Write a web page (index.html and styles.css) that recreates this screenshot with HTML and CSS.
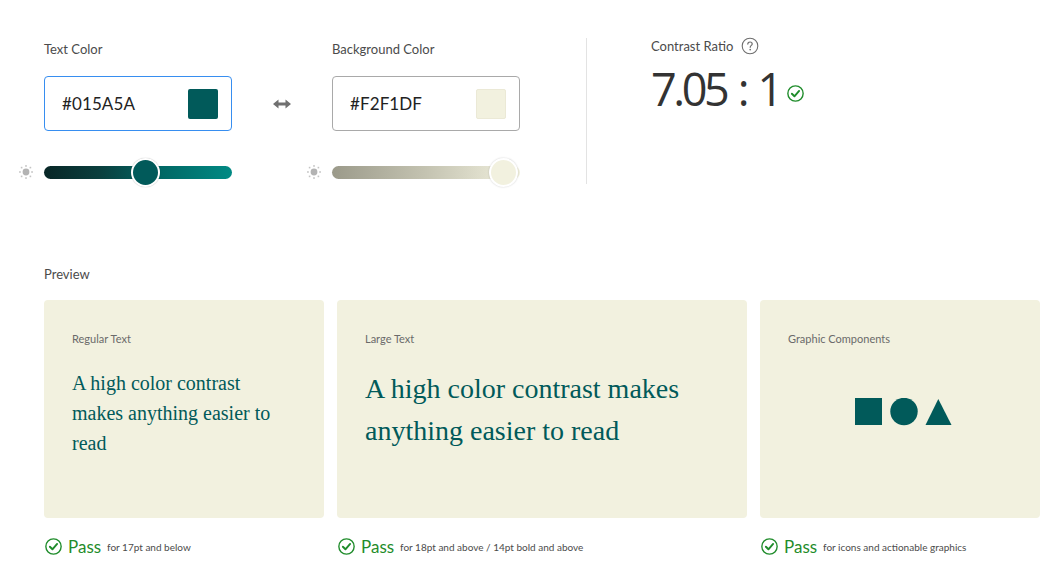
FILE: index.html
```html
<!DOCTYPE html>
<html lang="en">
<head>
<meta charset="utf-8">
<title>Contrast Checker</title>
<link rel="stylesheet" href="styles.css">
</head>
<body>
<main class="page">
  <section class="top">
    <div class="color-group">
      <div class="label">Text Color</div>
      <div class="field field-active">
        <span class="field-value">#015A5A</span>
        <span class="swatch swatch-text"></span>
      </div>
      <div class="slider-row">
        <svg class="sun" width="14" height="14" viewBox="0 0 14 14" aria-hidden="true">
          <circle cx="7" cy="7" r="3.4" fill="#b3b3b3"/>
          <g fill="#c4c4c4">
            <rect x="6.3" y="0" width="1.4" height="1.9"/>
            <rect x="6.3" y="12.1" width="1.4" height="1.9"/>
            <rect x="0" y="6.3" width="1.9" height="1.4"/>
            <rect x="12.1" y="6.3" width="1.9" height="1.4"/>
            <rect x="1.8" y="1.8" width="1.6" height="1.6"/>
            <rect x="10.6" y="1.8" width="1.6" height="1.6"/>
            <rect x="1.8" y="10.6" width="1.6" height="1.6"/>
            <rect x="10.6" y="10.6" width="1.6" height="1.6"/>
          </g>
        </svg>
        <div class="track track-text">
          <span class="thumb thumb-text" style="left: calc(53.7% - 14px)"></span>
        </div>
      </div>
    </div>

    <div class="swap">
      <svg width="18" height="10" viewBox="0 0 18 10" aria-hidden="true">
        <path d="M0 5 L5.5 0.5 V3.5 H12.5 V0.5 L18 5 L12.5 9.5 V6.5 H5.5 V9.5 Z" fill="#707070"/>
      </svg>
    </div>

    <div class="color-group">
      <div class="label">Background Color</div>
      <div class="field">
        <span class="field-value">#F2F1DF</span>
        <span class="swatch swatch-bg"></span>
      </div>
      <div class="slider-row">
        <svg class="sun" width="14" height="14" viewBox="0 0 14 14" aria-hidden="true">
          <circle cx="7" cy="7" r="3.4" fill="#b3b3b3"/>
          <g fill="#c4c4c4">
            <rect x="6.3" y="0" width="1.4" height="1.9"/>
            <rect x="6.3" y="12.1" width="1.4" height="1.9"/>
            <rect x="0" y="6.3" width="1.9" height="1.4"/>
            <rect x="12.1" y="6.3" width="1.9" height="1.4"/>
            <rect x="1.8" y="1.8" width="1.6" height="1.6"/>
            <rect x="10.6" y="1.8" width="1.6" height="1.6"/>
            <rect x="1.8" y="10.6" width="1.6" height="1.6"/>
            <rect x="10.6" y="10.6" width="1.6" height="1.6"/>
          </g>
        </svg>
        <div class="track track-bg">
          <span class="thumb thumb-bg" style="left: calc(91% - 14px)"></span>
        </div>
      </div>
    </div>

    <div class="divider"></div>

    <div class="ratio">
      <div class="ratio-label">
        <span>Contrast Ratio</span>
        <svg width="18" height="18" viewBox="0 0 18 18" aria-hidden="true">
          <circle cx="9" cy="9" r="7.8" fill="none" stroke="#6e6e6e" stroke-width="1.1"/>
          <path d="M6.8 7.1 C6.8 5.7 7.8 5 9 5 C10.3 5 11.2 5.8 11.2 6.9 C11.2 8.3 9.2 8.5 9.2 10.3" fill="none" stroke="#6e6e6e" stroke-width="1.2" stroke-linecap="round"/>
          <circle cx="9.2" cy="12.6" r="0.85" fill="#6e6e6e"/>
        </svg>
      </div>
      <div class="ratio-value">
        <span class="ratio-number">7.05 : 1</span>
        <svg class="check" width="17" height="17" viewBox="0 0 16 16" aria-hidden="true">
          <circle cx="8" cy="8" r="7.2" fill="none" stroke="#1f8c2b" stroke-width="1.3"/>
          <path d="M4.6 8.2 L7 10.6 L11.4 5.6" fill="none" stroke="#1f8c2b" stroke-width="1.8" stroke-linecap="round" stroke-linejoin="round"/>
        </svg>
      </div>
    </div>
  </section>

  <section class="preview">
    <div class="label">Preview</div>
    <div class="cards">
      <div class="col">
        <div class="card">
          <div class="card-title">Regular Text</div>
          <p class="sample sample-regular">A high color contrast makes anything easier to read</p>
        </div>
        <div class="pass">
          <svg class="check" width="17" height="17" viewBox="0 0 16 16" aria-hidden="true">
            <circle cx="8" cy="8" r="7.2" fill="none" stroke="#1f8c2b" stroke-width="1.3"/>
            <path d="M4.6 8.2 L7 10.6 L11.4 5.6" fill="none" stroke="#1f8c2b" stroke-width="1.8" stroke-linecap="round" stroke-linejoin="round"/>
          </svg>
          <span class="pass-word">Pass</span>
          <span class="pass-note">for 17pt and below</span>
        </div>
      </div>
      <div class="col">
        <div class="card">
          <div class="card-title">Large Text</div>
          <p class="sample sample-large">A high color contrast makes anything easier to read</p>
        </div>
        <div class="pass">
          <svg class="check" width="17" height="17" viewBox="0 0 16 16" aria-hidden="true">
            <circle cx="8" cy="8" r="7.2" fill="none" stroke="#1f8c2b" stroke-width="1.3"/>
            <path d="M4.6 8.2 L7 10.6 L11.4 5.6" fill="none" stroke="#1f8c2b" stroke-width="1.8" stroke-linecap="round" stroke-linejoin="round"/>
          </svg>
          <span class="pass-word">Pass</span>
          <span class="pass-note">for 18pt and above / 14pt bold and above</span>
        </div>
      </div>
      <div class="col">
        <div class="card">
          <div class="card-title">Graphic Components</div>
          <div class="shapes">
            <svg width="97" height="28" viewBox="0 0 97 28" aria-hidden="true">
              <rect x="0" y="0" width="27" height="27" fill="#015a5a"/>
              <circle cx="49" cy="13.5" r="13.7" fill="#015a5a"/>
              <path d="M70.5 27 L83.3 1 L96.5 27 Z" fill="#015a5a"/>
            </svg>
          </div>
        </div>
        <div class="pass">
          <svg class="check" width="17" height="17" viewBox="0 0 16 16" aria-hidden="true">
            <circle cx="8" cy="8" r="7.2" fill="none" stroke="#1f8c2b" stroke-width="1.3"/>
            <path d="M4.6 8.2 L7 10.6 L11.4 5.6" fill="none" stroke="#1f8c2b" stroke-width="1.8" stroke-linecap="round" stroke-linejoin="round"/>
          </svg>
          <span class="pass-word">Pass</span>
          <span class="pass-note">for icons and actionable graphics</span>
        </div>
      </div>
    </div>
  </section>
</main>
</body>
</html>
```

FILE: styles.css
```css
* { box-sizing: border-box; }

html, body {
  margin: 0;
  padding: 0;
  background: #ffffff;
}

body {
  font-family: Lato, "Open Sans", "Liberation Sans", sans-serif;
  color: #4b4b4b;
}

.page {
  padding: 40px 0 0 44px;
}

.label {
  font-size: 13px;
  line-height: 18px;
  color: #4b4b4b;
}

/* ---------- top ---------- */
.top {
  display: flex;
  align-items: flex-start;
}

.color-group {
  width: 188px;
  display: flex;
  flex-direction: column;
}

.field {
  margin-top: 18px;
  height: 55px;
  border: 1px solid #a9a9a9;
  border-radius: 4px;
  display: flex;
  align-items: center;
  justify-content: space-between;
  padding: 0 13px 0 17px;
  background: #fff;
}

.field-active {
  border-color: #378ef0;
}

.field-value {
  font-size: 17px;
  color: #222222;
  letter-spacing: 0.1px;
}

.swatch {
  width: 30px;
  height: 30px;
  border-radius: 2px;
}

.swatch-text { background: #015a5a; }
.swatch-bg { background: #f2f1df; border: 1px solid #ebe9d6; }

.slider-row {
  margin-top: 27px;
  margin-left: -25px;
  height: 28px;
  display: flex;
  align-items: center;
  gap: 11px;
}

.sun { flex: none; }

.track {
  position: relative;
  flex: 1;
  height: 13px;
  border-radius: 7px;
}

.track-text {
  background: linear-gradient(to right, #082626, #0a3f3e 30%, #016663 60%, #018a84);
}

.track-bg {
  background: linear-gradient(to right, #9b9a8a, #c4c3b1 50%, #f2f1df);
}

.thumb {
  position: absolute;
  top: -8px;
  width: 29px;
  height: 29px;
  border-radius: 50%;
  border: 2px solid #ffffff;
  box-shadow: 0 0 1px rgba(0, 0, 0, 0.35);
}

.thumb-text { background: #015a5a; }
.thumb-bg { background: #f2f1df; box-shadow: 0 0 2px rgba(0, 0, 0, 0.2); }

.swap {
  width: 100px;
  height: 55px;
  margin-top: 36px;
  display: flex;
  align-items: center;
  justify-content: center;
}

.divider {
  width: 1px;
  height: 146px;
  margin: -2px 0 0 66px;
  background: #e3e3e3;
}

.ratio {
  margin-left: 64px;
  margin-top: -3px;
}

.ratio-label {
  display: flex;
  align-items: center;
  gap: 8px;
  font-size: 13px;
  line-height: 18px;
  color: #4b4b4b;
}

.ratio-value {
  margin-top: 7px;
  display: flex;
  align-items: center;
  gap: 7px;
}

.ratio-number {
  font-family: "Open Sans", Lato, sans-serif;
  font-size: 45px;
  line-height: 54px;
  letter-spacing: -3.4px;
  word-spacing: 3px;
  color: #333333;
}

.ratio-value .check {
  margin-top: 8px;
}

/* ---------- preview ---------- */
.preview {
  margin-top: 79px;
}

.cards {
  margin-top: 17px;
  display: grid;
  grid-template-columns: 280px 410px 280px;
  column-gap: 13px;
}

.card {
  height: 218px;
  background: #f2f1df;
  border-radius: 4px;
  padding: 32px 28px 0 28px;
}

.card-title {
  font-size: 11px;
  line-height: 14px;
  color: #6a6a6a;
}

.sample {
  margin: 22px 0 0 0;
  font-family: "Liberation Serif", "Times New Roman", serif;
  color: #015a5a;
}

.sample-regular {
  font-size: 20px;
  line-height: 30px;
  padding-right: 20px;
}

.sample-large {
  font-size: 28px;
  line-height: 42px;
  padding-right: 20px;
}

.shapes {
  margin-top: 52px;
  display: flex;
  justify-content: center;
  padding-left: 7px;
}

.pass {
  margin-top: 18px;
  height: 20px;
  display: flex;
  align-items: center;
  padding-left: 1px;
}

.pass .check { flex: none; }

.pass-word {
  margin-left: 6px;
  font-size: 17px;
  color: #1f8c2b;
}

.pass-note {
  margin-left: 6px;
  font-size: 10px;
  color: #4b4b4b;
  padding-top: 2px;
}
```
